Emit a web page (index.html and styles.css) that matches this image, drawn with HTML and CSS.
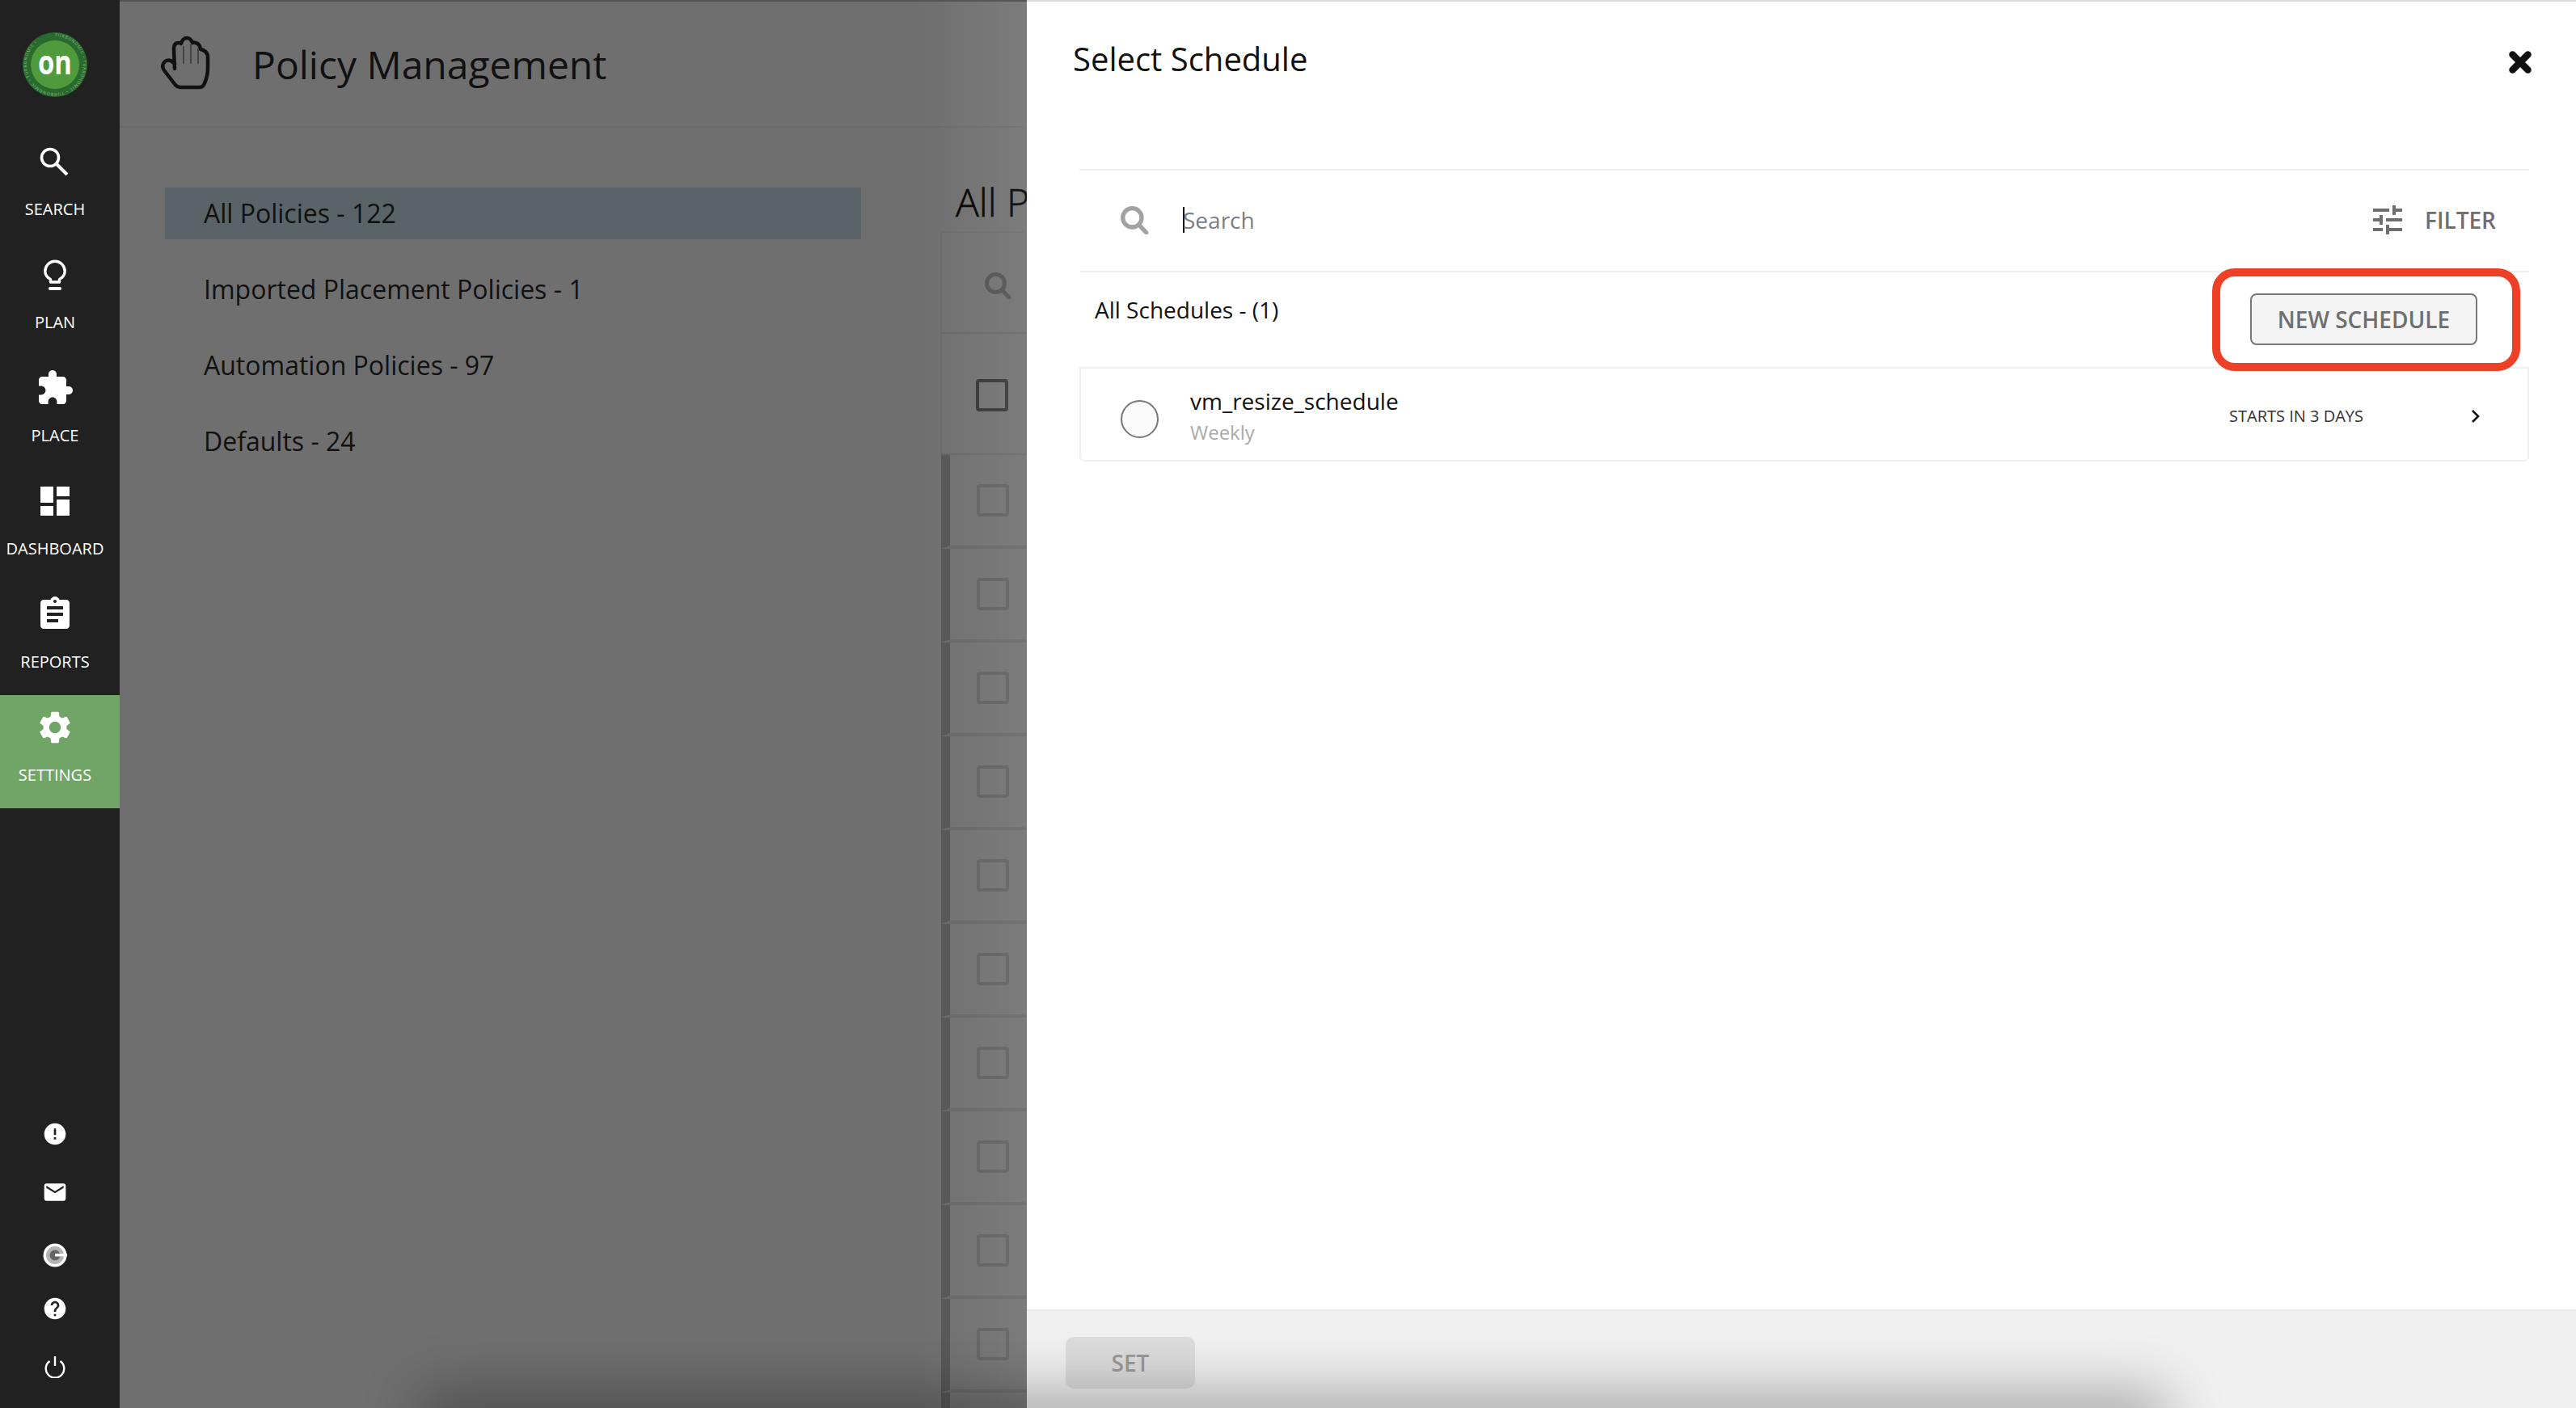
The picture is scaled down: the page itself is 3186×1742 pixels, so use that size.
FILE: index.html
```html
<!DOCTYPE html>
<html lang="en">
<head>
    <meta charset="UTF-8">
    <title>Policy Management</title>
    <link rel="stylesheet" href="styles.css">
</head>
<body>
<div class="app">
    <nav class="sidebar">
        <div class="logo">
            <svg width="80" height="80" viewBox="0 0 80 80">
                <circle cx="40" cy="40" r="40" fill="#2b6a2e"/>
                <circle cx="40" cy="40" r="30" fill="#4f9a3c"/>
                <defs><path id="ring" d="M40 5a35 35 0 1 1 -0.01 0"/></defs>
                <text class="logo-ring"><textPath href="#ring">TURBONOMIC • TURBONOMIC • TURBONOMIC • TURBONOMIC •</textPath></text>
                <text class="logo-on" x="40" y="52" text-anchor="middle" textLength="42" lengthAdjust="spacingAndGlyphs">on</text>
            </svg>
        </div>
        <a class="nav-item">
            <svg class="nav-icon" viewBox="0 0 48 48" fill="none" stroke="#fff"><circle cx="18" cy="19" r="10.5" stroke-width="3.6"/><path d="M26 27l13 13" stroke-width="4"/></svg>
            <span>SEARCH</span>
        </a>
        <a class="nav-item">
            <svg class="nav-icon" viewBox="0 0 48 48" fill="none" stroke="#fff"><path d="M18.5 33v-3.5c-4-2-6.700-5.500-6.700-10a12.200 12.200 0 0 1 24.400 0c0 4.500-2.700 8-6.700 10V33z" stroke-width="3.400" stroke-linejoin="round"/><path d="M18 41h12" stroke-width="4" stroke-linecap="round"/></svg>
            <span>PLAN</span>
        </a>
        <a class="nav-item">
            <svg class="nav-icon" viewBox="0 0 24 24" fill="#fff"><path d="M20.5 11H19V7c0-1.100-.9-2-2-2h-4V3.500C13 2.120 11.880 1 10.500 1S8 2.120 8 3.500V5H4c-1.100 0-1.990.9-1.990 2v3.800H3.500c1.490 0 2.700 1.210 2.700 2.700s-1.210 2.700-2.700 2.700H2V20c0 1.100.9 2 2 2h3.800v-1.500c0-1.490 1.210-2.700 2.700-2.700 1.490 0 2.700 1.210 2.700 2.700V22H17c1.100 0 2-.9 2-2v-4h1.500c1.380 0 2.500-1.120 2.500-2.500S21.880 11 20.500 11z"/></svg>
            <span>PLACE</span>
        </a>
        <a class="nav-item">
            <svg class="nav-icon" viewBox="0 0 24 24" fill="#fff"><path d="M3 13h8V3H3v10zm0 8h8v-6H3v6zm10 0h8V11h-8v10zm0-18v6h8V3h-8z"/></svg>
            <span>DASHBOARD</span>
        </a>
        <a class="nav-item">
            <svg class="nav-icon" viewBox="0 0 24 24" fill="#fff"><path d="M19 3h-4.180C14.400 1.840 13.300 1 12 1c-1.300 0-2.400.84-2.820 2H5c-1.100 0-2 .9-2 2v14c0 1.100.9 2 2 2h14c1.100 0 2-.9 2-2V5c0-1.100-.9-2-2-2zm-7 0c.55 0 1 .45 1 1s-.45 1-1 1-1-.45-1-1 .45-1 1-1zm2 14H7v-2h7v2zm3-4H7v-2h10v2zm0-4H7V7h10v2z"/></svg>
            <span>REPORTS</span>
        </a>
        <a class="nav-item nav-item-active">
            <svg class="nav-icon" viewBox="0 0 24 24" fill="#fff"><path d="M19.140 12.940c.04-.3.06-.61.06-.94 0-.32-.02-.64-.07-.94l2.030-1.580a.49.49 0 0 0 .12-.61l-1.920-3.320a.488.488 0 0 0-.59-.22l-2.390.96c-.5-.38-1.030-.7-1.620-.94l-.36-2.540a.484.484 0 0 0-.48-.41h-3.840c-.24 0-.43.17-.47.41l-.36 2.540c-.59.24-1.130.57-1.620.94l-2.390-.96c-.22-.08-.47 0-.59.22L2.740 8.870c-.12.21-.08.47.12.61l2.030 1.580c-.05.3-.09.63-.09.94s.02.64.07.94l-2.030 1.580a.49.49 0 0 0-.12.61l1.920 3.320c.12.22.37.29.59.22l2.390-.96c.5.38 1.030.7 1.620.94l.36 2.540c.05.24.24.41.48.41h3.840c.24 0 .44-.17.47-.41l.36-2.540c.59-.24 1.130-.56 1.620-.94l2.390.96c.22.08.47 0 .59-.22l1.920-3.320c.12-.22.07-.47-.12-.61l-2.010-1.580zM12 15.600c-1.980 0-3.600-1.620-3.600-3.600s1.620-3.600 3.600-3.600 3.600 1.620 3.600 3.600-1.620 3.600-3.600 3.600z"/></svg>
            <span>SETTINGS</span>
        </a>
        <div class="utils">
            <div class="util">
                <svg width="32" height="32" viewBox="0 0 24 24" fill="#fff"><path d="M12 2C6.480 2 2 6.480 2 12s4.480 10 10 10 10-4.480 10-10S17.520 2 12 2zm1 15h-2v-2h2v2zm0-4h-2V7h2v6z"/></svg>
            </div>
            <div class="util">
                <svg width="32" height="32" viewBox="0 0 24 24" fill="#fff"><path d="M20 4H4c-1.100 0-1.990.9-1.990 2L2 18c0 1.100.9 2 2 2h16c1.100 0 2-.9 2-2V6c0-1.100-.9-2-2-2zm0 4l-8 5-8-5V6l8 5 8-5v2z"/></svg>
            </div>
            <div class="util util-g">
                <svg width="30" height="30" viewBox="0 0 30 30"><circle cx="15" cy="15" r="14.500" fill="#fff"/><circle cx="15" cy="15" r="11" fill="#b4b4b4"/><circle cx="15" cy="15" r="6.500" fill="#666"/><path d="M15 13h15v3.500H15z" fill="#fff"/><path d="M21 16.500h4v4h-4z" fill="#b4b4b4"/></svg>
            </div>
            <div class="util">
                <svg width="32" height="32" viewBox="0 0 24 24" fill="#fff"><path d="M12 2C6.480 2 2 6.480 2 12s4.480 10 10 10 10-4.480 10-10S17.520 2 12 2zm1 17h-2v-2h2v2zm2.070-7.750l-.9.92C13.450 12.900 13 13.500 13 15h-2v-.5c0-1.100.45-2.100 1.170-2.830l1.240-1.260c.37-.36.59-.86.59-1.410 0-1.100-.9-2-2-2s-2 .9-2 2H8c0-2.210 1.790-4 4-4s4 1.790 4 4c0 .88-.36 1.680-.93 2.250z"/></svg>
            </div>
            <div class="util">
                <svg width="28" height="28" viewBox="0 0 28 28" fill="none" stroke="#fff" stroke-width="2.400"><path d="M7.500 7a11.300 11.300 0 1 0 13 0"/><path d="M14 1v12"/></svg>
            </div>
        </div>
    </nav>

    <main class="main">
        <header class="page-header">
            <svg class="hand" width="120" height="100" viewBox="0 0 120 100" fill="none" stroke="#111" stroke-width="4.500" stroke-linejoin="round" stroke-linecap="round">
                <path d="M46 56L45 31q0-7 6-7 2 0 3 1 2-7 7-7 5 0 7 6 2-1 4 0 5 1 6 8 7 1 9 8v15q0 10-4 19-2 5-6 5H53q-4 0-7-4L33 58q-4-6 1-11 6-4 12 3"/>
                <path d="M57 29v20M66 26v23M75 31v18" stroke-width="2" stroke="#444"/>
            </svg>
            <h1 class="page-title">Policy Management</h1>
        </header>
        <div class="content">
            <ul class="policy-menu">
                <li class="policy-item policy-item-active">All Policies - 122</li>
                <li class="policy-item">Imported Placement Policies - 1</li>
                <li class="policy-item">Automation Policies - 97</li>
                <li class="policy-item">Defaults - 24</li>
            </ul>
            <section class="policies">
                <h2 class="policies-title">All Policies</h2>
                <div class="table">
                    <div class="table-search">
                        <svg width="34" height="34" viewBox="0 0 34 34" fill="none" stroke="#505050"><circle cx="14.500" cy="14.500" r="11" stroke-width="5"/><path d="M22.500 23l8.500 9" stroke-width="5" stroke-linecap="round"/></svg>
                    </div>
                    <div class="table-head"><span class="check check-dark"></span></div>
                    <div class="table-row"><span class="check"></span></div>
                    <div class="table-row"><span class="check"></span></div>
                    <div class="table-row"><span class="check"></span></div>
                    <div class="table-row"><span class="check"></span></div>
                    <div class="table-row"><span class="check"></span></div>
                    <div class="table-row"><span class="check"></span></div>
                    <div class="table-row"><span class="check"></span></div>
                    <div class="table-row"><span class="check"></span></div>
                    <div class="table-row"><span class="check"></span></div>
                    <div class="table-row"><span class="check"></span></div>
                    <div class="table-row"><span class="check"></span></div>
                </div>
            </section>
        </div>
    </main>

    <aside class="panel">
        <div class="panel-head">
            <h2 class="panel-title">Select Schedule</h2>
            <svg class="panel-close" width="28" height="28" viewBox="0 0 28 28" stroke="#111" stroke-width="8.500" stroke-linecap="round"><path d="M4.500 4.500l19 19M23.500 4.500l-19 19"/></svg>
        </div>
        <div class="panel-body">
            <div class="search-bar">
                <svg width="36" height="36" viewBox="0 0 34 34" fill="none" stroke="#a2a2a2"><circle cx="14.500" cy="14.500" r="11" stroke-width="5"/><path d="M22.500 23l8.500 9" stroke-width="5" stroke-linecap="round"/></svg>
                <div class="search-input"><span class="caret"></span>Search</div>
                <svg width="36" height="36" viewBox="0 0 36 36" fill="#6e6e6e"><path d="M0 4h20v4H0zM24 0h4v12h-4zM28 4h8v4h-8zM0 16h8v4H0zM8 12h4v12H8zM16 16h20v4H16zM0 28h12v4H0zM16 24h4v12h-4zM20 28h16v4H20z"/></svg>
                <span class="filter-label">FILTER</span>
            </div>
            <div class="list-head">
                <span class="list-count">All Schedules - (1)</span>
                <button class="btn-new">NEW SCHEDULE</button>
            </div>
            <div class="schedule">
                <span class="radio"></span>
                <div class="schedule-info">
                    <div class="schedule-name">vm_resize_schedule</div>
                    <div class="schedule-type">Weekly</div>
                </div>
                <span class="schedule-start">STARTS IN 3 DAYS</span>
                <svg width="12" height="18" viewBox="0 0 12 18" fill="none" stroke="#111" stroke-width="2.600"><path d="M2 2l7 7-7 7"/></svg>
            </div>
        </div>
        <div class="panel-foot">
            <button class="btn-set">SET</button>
        </div>
        <div class="callout"></div>
    </aside>
    <div class="bottom-shadow"></div>
</div>
</body>
</html>
```

FILE: styles.css
```css
*{ padding: 0; margin: 0; box-sizing: border-box;}
html,body{
    height: 100%;
    overflow: hidden;
}
body{
    font-family: "Open Sans", "Liberation Sans", sans-serif;
    color: #111;
}
li{
    list-style: none;
}
.app{
    display: flex;
    height: 100vh;
    position: relative;
    overflow: hidden;
}

/* left nav */
.sidebar{
    width: 148px;
    flex: none;
    display: flex;
    flex-direction: column;
    background-color: #212121;
    color: #fff;
}
.logo{
    height: 160px;
    display: flex;
    align-items: center;
    padding-left: 28px;
}
.logo-ring{
    font-size: 5px;
    letter-spacing: .9px;
    fill: #8fbf8c;
}
.logo-on{
    font-size: 41px;
    font-weight: 700;
    fill: #fff;
}
.nav-item{
    height: 140px;
    display: flex;
    flex-direction: column;
    align-items: center;
    padding: 16px 12px 0 0;
    font-size: 20px;
    line-height: 28px;
}
.nav-item span{
    margin-top: 21px;
}
.nav-icon{
    width: 48px;
    height: 48px;
    display: block;
}
.nav-item-active{
    background-color: #71a567;
}
.utils{
    margin-top: auto;
    padding: 0 12px 15px 0;
}
.util{
    height: 72px;
    display: flex;
    align-items: center;
    justify-content: center;
}
.util-g{
    margin-top: 6px;
    margin-bottom: -6px;
}

/* page behind the panel */
.main{
    flex: 1;
    min-width: 0;
    position: relative;
    background-color: #6f6f6f;
    border-top: 2px solid #555;
}
.main::after{
    content: "";
    position: absolute;
    top: 0;
    bottom: 0;
    left: 990px;
    width: 132px;
    background: linear-gradient(to right, rgba(255,255,255,0), rgba(255,255,255,.09));
}
.page-header{
    height: 156px;
    display: flex;
    align-items: center;
    padding-left: 22px;
    border-bottom: 2px solid #6a6a6a;
}
.page-title{
    margin-left: 22px;
    font-size: 48px;
    font-weight: 400;
    color: #111;
}
.content{
    display: flex;
}
.policy-menu{
    width: 861px;
    margin-left: 56px;
    padding-top: 74px;
}
.policy-item{
    height: 64px;
    margin-bottom: 30px;
    padding-left: 48px;
    font-size: 32px;
    line-height: 64px;
}
.policy-item-active{
    background-color: #5a6367;
}
.policies{
    width: 700px;
    margin-left: 98px;
    padding-top: 60px;
}
.policies-title{
    height: 68px;
    margin-left: 19px;
    font-size: 48px;
    font-weight: 300;
    line-height: 64px;
    white-space: nowrap;
    color: #000;
    -webkit-text-stroke: .6px #000;
}
.table-search{
    height: 127px;
    padding: 48px 0 0 52px;
    border-top: 2px solid #6a6a6a;
    border-left: 2px solid #6a6a6a;
    border-bottom: 2px solid #666;
}
.table-head{
    height: 150px;
    padding: 56px 0 0 42px;
    border-left: 2px solid #6a6a6a;
    border-bottom: 2px solid #666;
}
.table-row{
    height: 116px;
    padding: 36px 0 0 33px;
    border-left: 11px solid #555;
    border-bottom: 4px solid #666;
    margin-left: 1px;
}
.check{
    display: block;
    width: 40px;
    height: 40px;
    border: 4px solid #5f5f5f;
    border-radius: 4px;
}
.check-dark{
    border-color: #333;
}

/* schedule panel */
.panel{
    position: absolute;
    top: 0;
    right: 0;
    bottom: 0;
    width: 1916px;
    display: flex;
    flex-direction: column;
    background-color: #fff;
    border-top: 2px solid #ddd;
}
.panel-head{
    height: 207px;
    flex: none;
    display: flex;
    justify-content: space-between;
    padding: 46px 55px 0 57px;
}
.panel-title{
    font-size: 40px;
    font-weight: 400;
    line-height: 50px;
}
.panel-close{
    margin-top: 15px;
}
.panel-body{
    flex: 1;
    margin: 0 58px 0 65px;
}
.search-bar{
    height: 128px;
    display: flex;
    align-items: center;
    padding: 0 41px 2px 50px;
    border-top: 2px solid #f0f0f0;
    border-bottom: 2px solid #f0f0f0;
}
.search-input{
    flex: 1;
    display: flex;
    align-items: center;
    margin-left: 42px;
    font-size: 28px;
    color: #7a8087;
}
.caret{
    width: 2px;
    height: 32px;
    margin-right: -2px;
    background-color: #111;
}
.filter-label{
    margin-left: 28px;
    font-size: 28px;
    font-weight: 600;
    color: #6e6e6e;
}
.list-head{
    height: 117px;
    display: flex;
    justify-content: space-between;
    padding: 0 64px 0 19px;
}
.list-count{
    font-size: 28px;
    line-height: 92px;
}
.btn-new{
    width: 281px;
    height: 64px;
    margin-top: 26px;
    background-color: #f4f4f4;
    border: 2px solid #777;
    border-radius: 8px;
    font-family: inherit;
    font-size: 28px;
    font-weight: 600;
    color: #6f6f6f;
}
.callout{
    position: absolute;
    left: 1466px;
    top: 330px;
    width: 381px;
    height: 127px;
    border: 10px solid #ee4026;
    border-radius: 28px;
}
.schedule{
    height: 117px;
    display: flex;
    align-items: center;
    padding: 4px 58px 0 49px;
    border: 2px solid #f0f0f0;
    border-radius: 0 0 6px 6px;
}
.radio{
    width: 47px;
    height: 47px;
    margin-top: 8px;
    background-color: #fafafa;
    border: 2px solid #777;
    border-radius: 50%;
}
.schedule-info{
    flex: 1;
    margin-left: 39px;
}
.schedule-name{
    font-size: 28px;
    line-height: 38px;
}
.schedule-type{
    margin-top: 2px;
    font-size: 24px;
    line-height: 36px;
    color: #aaa;
}
.schedule-start{
    margin-right: 133px;
    font-size: 20px;
    font-weight: 400;
    color: #333;
}
.panel-foot{
    height: 122px;
    flex: none;
    padding: 32px 0 0 48px;
    background-color: #f0f0f0;
    border-top: 2px solid #e6e8ea;
}
.btn-set{
    width: 160px;
    height: 64px;
    background-color: #dcdcdc;
    border: none;
    border-radius: 10px;
    font-family: inherit;
    font-size: 28px;
    font-weight: 600;
    color: #999;
}
.bottom-shadow{
    position: absolute;
    left: 540px;
    bottom: -40px;
    width: 2120px;
    height: 40px;
    box-shadow: 0 0 70px 20px rgba(0,0,0,.3);
}
```
